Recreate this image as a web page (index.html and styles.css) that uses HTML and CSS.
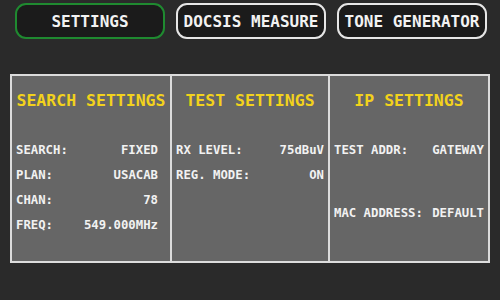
FILE: index.html
```html
<!DOCTYPE html>
<html>
<head>
<meta charset="utf-8">
<link rel="stylesheet" href="styles.css">
</head>
<body>
<div class="tabs">
  <div class="tab active">SETTINGS</div>
  <div class="tab">DOCSIS MEASURE</div>
  <div class="tab">TONE GENERATOR</div>
</div>
<div class="panels">
  <div class="panel p1">
    <div class="title">SEARCH SETTINGS</div>
    <div class="rows">
      <div class="row"><span>SEARCH:</span><span>FIXED</span></div>
      <div class="row"><span>PLAN:</span><span>USACAB</span></div>
      <div class="row"><span>CHAN:</span><span>78</span></div>
      <div class="row"><span>FREQ:</span><span>549.000MHz</span></div>
    </div>
  </div>
  <div class="panel p2">
    <div class="title">TEST SETTINGS</div>
    <div class="rows">
      <div class="row"><span>RX LEVEL:</span><span>75dBuV</span></div>
      <div class="row"><span>REG. MODE:</span><span>ON</span></div>
    </div>
  </div>
  <div class="panel p3">
    <div class="title">IP SETTINGS</div>
    <div class="rows">
      <div class="row"><span>TEST ADDR:</span><span>GATEWAY</span></div>
      <div class="row mac"><span>MAC ADDRESS:</span><span>DEFAULT</span></div>
    </div>
  </div>
</div>
</body>
</html>
```
FILE: styles.css
```css
html, body {
  margin: 0;
  padding: 0;
}
body {
  width: 500px;
  height: 300px;
  background: #2a2a2a;
  font-family: "DejaVu Sans Mono", "Liberation Mono", monospace;
  font-weight: bold;
  overflow: hidden;
}
.tabs {
  display: flex;
  gap: 11px;
  padding: 3px 0 0 15px;
}
.tab {
  box-sizing: border-box;
  width: 150px;
  height: 36px;
  border: 2px solid #e6e6e6;
  border-radius: 11px;
  background: #1b1b1b;
  color: #f2f2f2;
  font-size: 16px;
  display: flex;
  align-items: center;
  justify-content: center;
}
.tab.active {
  border-color: #1f8a30;
}
.panels {
  box-sizing: border-box;
  margin: 35px 0 0 10px;
  width: 480px;
  height: 189px;
  border: 2px solid #dcdcdc;
  display: grid;
  grid-template-columns: 158px 158px 1fr;
  background: #666666;
}
.panel {
  display: flex;
  flex-direction: column;
}
.p2, .p3 {
  border-left: 2px solid #dcdcdc;
}
.title {
  color: #f2d21c;
  font-size: 16.5px;
  text-align: center;
  margin-top: 15px;
  line-height: 20px;
}
.rows {
  margin-top: 32px;
  display: flex;
  flex-direction: column;
  gap: 10px;
}
.row {
  display: flex;
  justify-content: space-between;
  color: #f2f2f2;
  font-size: 12.3px;
  line-height: 15px;
}
.p1 .rows { padding: 0 12px 0 4px; }
.p2 .rows { padding: 0 4px 0 4px; }
.p3 .rows { padding: 0 4px 0 4px; }
.row.mac {
  margin-top: 38px;
}
```
